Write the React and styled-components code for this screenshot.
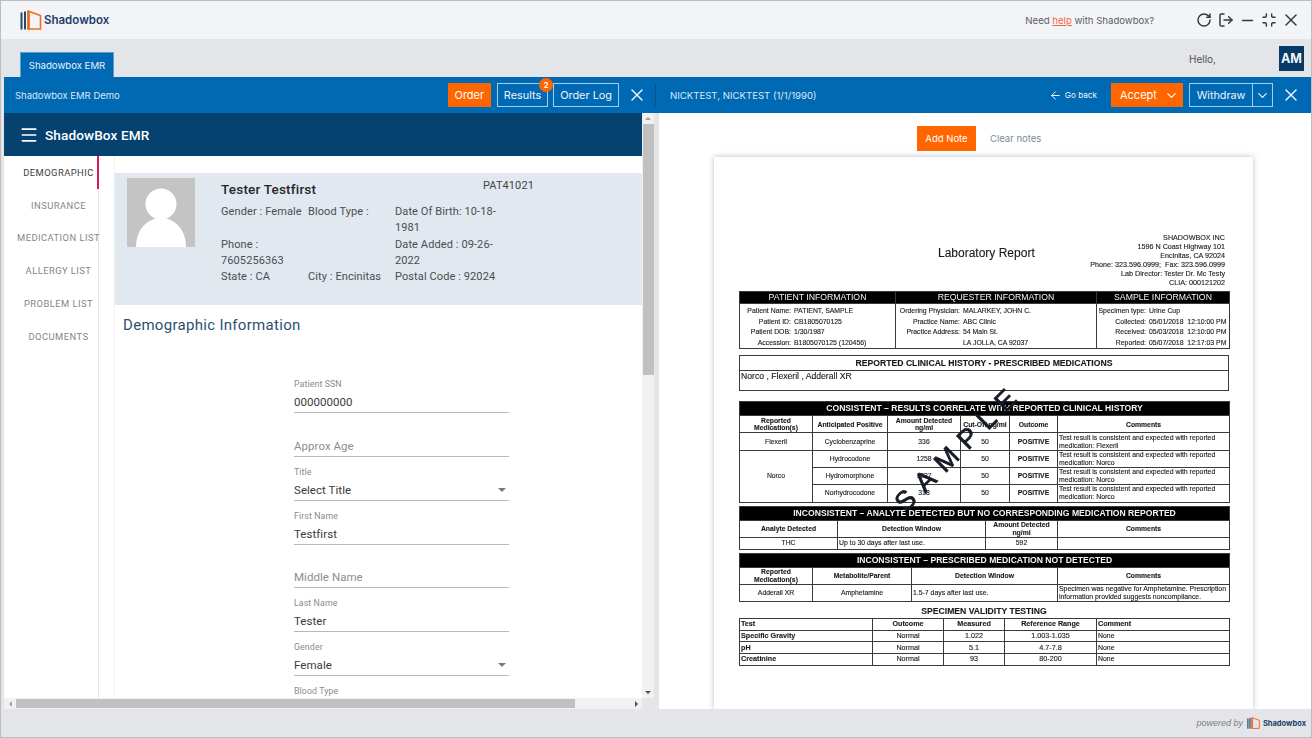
import styled, { createGlobalStyle } from "styled-components";
import { RotateCw, LogOut, Minus, Minimize, X, Menu, ArrowLeft, ChevronDown } from "lucide-react";

const Global = createGlobalStyle`
  html, body { margin: 0; padding: 0; }
  body { font-family: "Inter", "Liberation Sans", sans-serif; overflow: hidden; }
  * { box-sizing: border-box; }
`;

const Logo = ({ h = 20 }) => (
  <svg width={h * 1.15} height={h} viewBox="0 0 23 20" fill="none">
    <rect x="0.5" y="2.5" width="2" height="17" fill="#1d4b78" />
    <rect x="4" y="1.5" width="2" height="18" fill="#1d4b78" />
    <path d="M8 1 L20.5 5.5 V19 H8 Z" stroke="#f26a1b" strokeWidth="1.6" />
    <rect x="7.5" y="1" width="2.4" height="18.6" fill="#f26a1b" />
  </svg>
);

const consistentRows = [
  ["Cyclobenzaprine", "336", "Flexeril"],
  ["Hydrocodone", "1258", "Norco"],
  ["Hydromorphone", "1237", "Norco"],
  ["Norhydrocodone", "318", "Norco"],
];

const validityRows = [
  ["Specific Gravity", "1.022", "1.003-1.035"],
  ["pH", "5.1", "4.7-7.8"],
  ["Creatinine", "93", "80-200"],
];

const Cols = ({ widths }) => (
  <colgroup>
    {widths.map((w, i) => (
      <col key={i} width={w} />
    ))}
  </colgroup>
);

const Field = ({ label, value, placeholder, select }) => (
  <FieldBox>
    {label && <FieldLabel>{label}</FieldLabel>}
    <FieldValue $placeholder={placeholder}>
      {value || placeholder}
      {select && <Caret />}
    </FieldValue>
  </FieldBox>
);

const App = () => {
  return (
    <Shell>
      <Global />
      <TopBar>
        <Brand>
          <Logo />
          <BrandName>Shadowbox</BrandName>
        </Brand>
        <HelpText>
          Need <HelpLink>help</HelpLink> with Shadowbox?
        </HelpText>
        <WindowIcons>
          <IconCell><RotateCw size={16} strokeWidth={2.2} /></IconCell>
          <IconCell><LogOut size={16} strokeWidth={2.2} /></IconCell>
          <IconCell><Minus size={17} strokeWidth={2} /></IconCell>
          <IconCell><Minimize size={16} strokeWidth={2.2} /></IconCell>
          <IconCell><X size={20} strokeWidth={1.8} /></IconCell>
        </WindowIcons>
      </TopBar>

      <TabStrip>
        <Tab>Shadowbox EMR</Tab>
        <Hello>Hello,</Hello>
        <Avatar>AM</Avatar>
      </TabStrip>

      <Work>
        <BlueBar>
          <BarLeft>
            <BarTitle>Shadowbox EMR Demo</BarTitle>
            <OrangeButton>Order</OrangeButton>
            <OutlineButton>
              Results
              <Badge>2</Badge>
            </OutlineButton>
            <OutlineButton>Order Log</OutlineButton>
            <CloseIcon size={20} strokeWidth={1.7} $ml={3} />
          </BarLeft>
          <BarDivider />
          <BarRight>
            <PatientName>NICKTEST, NICKTEST (1/1/1990)</PatientName>
            <GoBack>
              <ArrowLeft size={13} strokeWidth={1.8} />
              Go back
            </GoBack>
            <AcceptButton>
              Accept
              <ChevronDown size={15} strokeWidth={1.8} />
            </AcceptButton>
            <SplitButton>
              <SplitLabel>Withdraw</SplitLabel>
              <SplitArrow>
                <ChevronDown size={15} strokeWidth={1.8} />
              </SplitArrow>
            </SplitButton>
            <CloseIcon size={20} strokeWidth={1.7} $ml={8} />
          </BarRight>
        </BlueBar>

        <Panels>
          <LeftPanel>
            <LeftMain>
              <LeftScroll>
                <AppHeader>
                  <Menu size={20} strokeWidth={2} />
                  ShadowBox EMR
                </AppHeader>
                <LeftBody>
                  <SideNav>
                    <NavItem $active>Demographic</NavItem>
                    <NavItem>Insurance</NavItem>
                    <NavItem>Medication List</NavItem>
                    <NavItem>Allergy List</NavItem>
                    <NavItem>Problem List</NavItem>
                    <NavItem>Documents</NavItem>
                  </SideNav>
                  <NavGap />
                  <Content>
                    <PatientCard>
                      <Photo>
                        <svg width="68" height="69" viewBox="0 0 68 69">
                          <circle cx="34" cy="26" r="15.5" fill="#fff" />
                          <path d="M9 69 C9 52 20 40 34 40 C48 40 59 52 59 69 Z" fill="#fff" />
                        </svg>
                      </Photo>
                      <CardInfo>
                        <NameRow>
                          <PatientFullName>Tester Testfirst</PatientFullName>
                          <PatientCode>PAT41021</PatientCode>
                        </NameRow>
                        <InfoGrid>
                          <span>Gender : Female</span>
                          <span>Blood Type :</span>
                          <span>Date Of Birth: 10-18-1981</span>
                          <span>Phone : 7605256363</span>
                          <span />
                          <span>Date Added : 09-26-2022</span>
                          <span>State : CA</span>
                          <span>City : Encinitas</span>
                          <span>Postal Code : 92024</span>
                        </InfoGrid>
                      </CardInfo>
                    </PatientCard>
                    <SectionTitle>Demographic Information</SectionTitle>
                    <FormColumn>
                      <Field label="Patient SSN" value="000000000" />
                      <Field placeholder="Approx Age" />
                      <Field label="Title" value="Select Title" select />
                      <Field label="First Name" value="Testfirst" />
                      <Field placeholder="Middle Name" />
                      <Field label="Last Name" value="Tester" />
                      <Field label="Gender" value="Female" select />
                      <Field label="Blood Type" />
                    </FormColumn>
                  </Content>
                </LeftBody>
              </LeftScroll>
              <VTrack>
                <ArrowCell>
                  <TriUp />
                </ArrowCell>
                <VThumb />
                <ArrowCell $end>
                  <TriDown />
                </ArrowCell>
              </VTrack>
            </LeftMain>
            <HTrack>
              <ArrowCell $h>
                <TriLeft />
              </ArrowCell>
              <HThumb />
              <ArrowCell $h $end>
                <TriRight />
              </ArrowCell>
              <Corner />
            </HTrack>
          </LeftPanel>

          <RightPanel>
            <NoteBar>
              <OrangeNote>Add Note</OrangeNote>
              <ClearNotes>Clear notes</ClearNotes>
            </NoteBar>
            <Sheet>
              <SheetHead>
                <ReportTitle>Laboratory Report</ReportTitle>
                <Address>
                  <div>SHADOWBOX INC</div>
                  <div>1596 N Coast Highway 101</div>
                  <div>Encinitas, CA 92024</div>
                  <div>Phone: 323.596.0999; &nbsp;Fax: 323.596.0999</div>
                  <div>Lab Director: Tester Dr. Mc Testy</div>
                  <div>CLIA: 000121202</div>
                </Address>
              </SheetHead>

              <ReportTable>
                <Cols widths={[156, 201, 133]} />
                <tbody>
                  <tr>
                    <BlackCell $thin>PATIENT INFORMATION</BlackCell>
                    <BlackCell $thin>REQUESTER INFORMATION</BlackCell>
                    <BlackCell $thin>SAMPLE INFORMATION</BlackCell>
                  </tr>
                  <tr>
                    <InfoCell>
                      <KeyValues $key={51}>
                        <dt>Patient Name:</dt><dd>PATIENT, SAMPLE</dd>
                        <dt>Patient ID:</dt><dd>CB1805070125</dd>
                        <dt>Patient DOB:</dt><dd>1/30/1987</dd>
                        <dt>Accession:</dt><dd>B1805070125 (120456)</dd>
                      </KeyValues>
                    </InfoCell>
                    <InfoCell>
                      <KeyValues $key={64}>
                        <dt>Ordering Physician:</dt><dd>MALARKEY, JOHN C.</dd>
                        <dt>Practice Name:</dt><dd>ABC Clinic</dd>
                        <dt>Practice Address:</dt><dd>54 Main St.</dd>
                        <dt />
                        <dd>LA JOLLA, CA 92037</dd>
                      </KeyValues>
                    </InfoCell>
                    <InfoCell>
                      <KeyValues $key={49}>
                        <dt>Specimen type:</dt><dd>Urine Cup</dd>
                        <dt>Collected:</dt><dd>05/01/2018 &nbsp;12:10:00 PM</dd>
                        <dt>Received:</dt><dd>05/03/2018 &nbsp;12:10:00 PM</dd>
                        <dt>Reported:</dt><dd>05/07/2018 &nbsp;12:17:03 PM</dd>
                      </KeyValues>
                    </InfoCell>
                  </tr>
                </tbody>
              </ReportTable>

              <ReportTable $top={6}>
                <tbody>
                  <Row $h={14}>
                    <HeadCell $plain>REPORTED CLINICAL HISTORY - PRESCRIBED MEDICATIONS</HeadCell>
                  </Row>
                  <Row $h={20}>
                    <HistoryCell>Norco , Flexeril , Adderall XR</HistoryCell>
                  </Row>
                </tbody>
              </ReportTable>

              <ReportTable $top={10}>
                <Cols widths={[73, 75, 73, 49, 48, 172]} />
                <tbody>
                  <Row $h={14}>
                    <BlackCell colSpan={6}>CONSISTENT – RESULTS CORRELATE WITH REPORTED CLINICAL HISTORY</BlackCell>
                  </Row>
                  <Row $h={17}>
                    <HeadCell>Reported<br />Medication(s)</HeadCell>
                    <HeadCell>Anticipated Positive</HeadCell>
                    <HeadCell>Amount Detected<br />ng/ml</HeadCell>
                    <HeadCell>Cut-Off ng/ml</HeadCell>
                    <HeadCell>Outcome</HeadCell>
                    <HeadCell>Comments</HeadCell>
                  </Row>
                  {consistentRows.map((row, i) => (
                    <Row $h={17.3} key={row[0]}>
                      {i === 0 && <BodyCell>Flexeril</BodyCell>}
                      {i === 1 && <BodyCell rowSpan={3}>Norco</BodyCell>}
                      <BodyCell>{row[0]}</BodyCell>
                      <BodyCell>{row[1]}</BodyCell>
                      <BodyCell>50</BodyCell>
                      <BodyCell $bold>POSITIVE</BodyCell>
                      <CommentCell>
                        {`Test result is consistent and expected with reported medication: ${row[2]}`}
                      </CommentCell>
                    </Row>
                  ))}
                </tbody>
              </ReportTable>

              <ReportTable $top={3}>
                <Cols widths={[98, 148, 72, 172]} />
                <tbody>
                  <Row $h={14}>
                    <BlackCell colSpan={4}>INCONSISTENT – ANALYTE DETECTED BUT NO CORRESPONDING MEDICATION REPORTED</BlackCell>
                  </Row>
                  <Row $h={17}>
                    <HeadCell>Analyte Detected</HeadCell>
                    <HeadCell>Detection Window</HeadCell>
                    <HeadCell>Amount Detected<br />ng/ml</HeadCell>
                    <HeadCell>Comments</HeadCell>
                  </Row>
                  <Row $h={12}>
                    <BodyCell>THC</BodyCell>
                    <CommentCell>Up to 30 days after last use.</CommentCell>
                    <BodyCell>592</BodyCell>
                    <CommentCell />
                  </Row>
                </tbody>
              </ReportTable>

              <ReportTable $top={3}>
                <Cols widths={[73, 99, 146, 172]} />
                <tbody>
                  <Row $h={14}>
                    <BlackCell colSpan={4}>INCONSISTENT – PRESCRIBED MEDICATION NOT DETECTED</BlackCell>
                  </Row>
                  <Row $h={17}>
                    <HeadCell>Reported<br />Medication(s)</HeadCell>
                    <HeadCell>Metabolite/Parent</HeadCell>
                    <HeadCell>Detection Window</HeadCell>
                    <HeadCell>Comments</HeadCell>
                  </Row>
                  <Row $h={17}>
                    <BodyCell>Adderall XR</BodyCell>
                    <BodyCell>Amphetamine</BodyCell>
                    <CommentCell>1.5-7 days after last use.</CommentCell>
                    <CommentCell>
                      Specimen was negative for Amphetamine. Prescription information provided suggests noncompliance.
                    </CommentCell>
                  </Row>
                </tbody>
              </ReportTable>

              <ValidityTitle>SPECIMEN VALIDITY TESTING</ValidityTitle>
              <ReportTable $large>
                <Cols widths={[133, 71, 61, 92, 133]} />
                <tbody>
                  <Row $h={12}>
                    <HeadCell $left>Test</HeadCell>
                    <HeadCell>Outcome</HeadCell>
                    <HeadCell>Measured</HeadCell>
                    <HeadCell>Reference Range</HeadCell>
                    <HeadCell $left>Comment</HeadCell>
                  </Row>
                  {validityRows.map(row => (
                    <Row $h={11.7} key={row[0]}>
                      <HeadCell $left>{row[0]}</HeadCell>
                      <BodyCell>Normal</BodyCell>
                      <BodyCell>{row[1]}</BodyCell>
                      <BodyCell>{row[2]}</BodyCell>
                      <CommentCell>None</CommentCell>
                    </Row>
                  ))}
                </tbody>
              </ReportTable>

              <Watermark>SAMPLE</Watermark>
            </Sheet>
          </RightPanel>
        </Panels>
      </Work>

      <Footer>
        <PoweredBy>powered by</PoweredBy>
        <Logo h={12} />
        <FooterName>Shadowbox</FooterName>
      </Footer>
    </Shell>
  );
};

export default App;

/* ---------------------------- Styled Components --------------------------- */

const Shell = styled.div`
  width: 1312px;
  height: 738px;
  display: flex;
  flex-direction: column;
  border: 1px solid #bcbdc1;
  background: #e4e5e9;
  overflow: hidden;
`;

const TopBar = styled.header`
  height: 38px;
  flex: none;
  display: flex;
  align-items: center;
  padding: 0 9px 0 19px;
  background: #f3f4f6;
`;

const Brand = styled.div`
  display: flex;
  align-items: center;
  flex: 1;
`;

const BrandName = styled.span`
  margin-left: 1px;
  font-size: 11.5px;
  font-weight: 600;
  color: #1d4068;
`;

const HelpText = styled.span`
  font-size: 9.6px;
  color: #5a5f69;
  margin-right: 39px;
`;

const HelpLink = styled.span`
  color: #f0654a;
  text-decoration: underline;
`;

const WindowIcons = styled.div`
  display: flex;
  align-items: center;
  color: #33383f;
`;

const IconCell = styled.span`
  width: 21.75px;
  display: flex;
  align-items: center;
  justify-content: center;
`;

const TabStrip = styled.div`
  height: 38px;
  flex: none;
  display: flex;
  align-items: flex-end;
  padding: 0 7px 0 19px;
`;

const Tab = styled.div`
  width: 94px;
  height: 25px;
  display: flex;
  align-items: center;
  justify-content: center;
  background: #0069b4;
  border: 1px solid #5b9dcd;
  border-bottom: 0;
  color: #e8f1f8;
  font-size: 9.6px;
`;

const Hello = styled.span`
  margin-left: auto;
  align-self: center;
  padding-top: 2px;
  font-size: 10px;
  color: #4c5058;
`;

const Avatar = styled.div`
  width: 25px;
  height: 25px;
  margin: 0 0 6px 63px;
  display: flex;
  align-items: center;
  justify-content: center;
  background: #053a66;
  color: #f1f4f7;
  font-size: 12.5px;
  font-weight: 700;
`;

const Work = styled.main`
  height: 632px;
  flex: none;
  margin-left: 3px;
  display: flex;
  flex-direction: column;
`;

const BlueBar = styled.div`
  height: 36px;
  flex: none;
  display: flex;
  align-items: center;
  background: #0069b4;
  color: #fff;
`;

const BarLeft = styled.div`
  width: 651px;
  height: 100%;
  display: flex;
  align-items: center;
  gap: 5px;
  padding: 0 8px 0 11px;
`;

const BarTitle = styled.span`
  margin-right: auto;
  font-size: 9.5px;
  color: #dbe8f3;
`;

const BarDivider = styled.span`
  width: 1px;
  height: 22px;
  background: #04528d;
`;

const BarRight = styled.div`
  flex: 1;
  height: 100%;
  display: flex;
  align-items: center;
  padding: 0 10px 0 14px;
`;

const OrangeButton = styled.div`
  width: 43px;
  height: 24px;
  margin-right: 1px;
  display: flex;
  align-items: center;
  justify-content: center;
  background: #ff6600;
  color: #fff;
  font-size: 11px;
`;

const OutlineButton = styled.div`
  position: relative;
  height: 24px;
  padding: 0 6px;
  display: flex;
  align-items: center;
  border: 1px solid #a9cde6;
  color: #f0f6fa;
  font-size: 10.9px;
  white-space: nowrap;
`;

const Badge = styled.span`
  position: absolute;
  top: -6px;
  right: -6px;
  width: 14px;
  height: 14px;
  border-radius: 50%;
  display: flex;
  align-items: center;
  justify-content: center;
  background: #ff6600;
  color: #fff;
  font-size: 7.5px;
  font-weight: 700;
`;

const CloseIcon = styled(X)`
  margin-left: ${p => p.$ml}px;
  flex: none;
  color: #f2f7fb;
`;

const PatientName = styled.span`
  margin-right: auto;
  font-size: 9.6px;
  color: #dbe8f3;
`;

const GoBack = styled.span`
  display: flex;
  align-items: center;
  gap: 3px;
  margin-right: 14px;
  font-size: 8.2px;
  color: #eef4f9;
`;

const AcceptButton = styled.div`
  width: 72px;
  height: 24px;
  padding: 0 4px 0 9px;
  display: flex;
  align-items: center;
  justify-content: space-between;
  background: #ff6600;
  color: #fff;
  font-size: 11px;
`;

const SplitButton = styled.div`
  height: 24px;
  margin-left: 6px;
  display: flex;
  align-items: center;
  border: 1px solid #a9cde6;
  font-size: 10.8px;
  color: #f0f6fa;
`;

const SplitLabel = styled.span`
  width: 62px;
  text-align: center;
`;

const SplitArrow = styled.span`
  width: 20px;
  height: 100%;
  display: flex;
  align-items: center;
  justify-content: center;
  border-left: 1px solid #a9cde6;
`;

const Panels = styled.div`
  flex: 1;
  min-height: 0;
  display: flex;
  justify-content: space-between;
`;

const LeftPanel = styled.section`
  width: 650px;
  height: 597px;
  display: flex;
  flex-direction: column;
  background: #fff;
  border-bottom: 1px solid #26282b;
`;

const LeftMain = styled.div`
  flex: 1;
  min-height: 0;
  display: flex;
`;

const LeftScroll = styled.div`
  width: 638px;
  display: flex;
  flex-direction: column;
`;

const AppHeader = styled.div`
  height: 43px;
  flex: none;
  display: flex;
  align-items: center;
  gap: 6px;
  padding-left: 15px;
  background: #064270;
  color: #fff;
  font-family: "Roboto", sans-serif;
  font-size: 13.6px;
  font-weight: 500;
  letter-spacing: 0.1px;
`;

const LeftBody = styled.div`
  flex: 1;
  min-height: 0;
  display: flex;
`;

const SideNav = styled.nav`
  width: 95px;
  flex: none;
  border-right: 1px solid #e6e6e6;
  font-family: "Roboto", sans-serif;
`;

const NavItem = styled.div`
  height: 32.8px;
  padding-left: 16px;
  margin-right: -1px;
  display: flex;
  align-items: center;
  justify-content: center;
  white-space: nowrap;
  text-transform: uppercase;
  font-size: 9.4px;
  letter-spacing: 0.45px;
  color: ${p => (p.$active ? "#3c3c3c" : "#858585")};
  border-right: 2px solid ${p => (p.$active ? "#d81b60" : "transparent")};
`;

const NavGap = styled.div`
  width: 16px;
  flex: none;
  border-right: 1px solid #f0f0f0;
`;

const Content = styled.div`
  flex: 1;
  min-width: 0;
  padding-top: 17px;
  overflow: hidden;
  font-family: "Roboto", sans-serif;
`;

const PatientCard = styled.div`
  height: 132px;
  display: flex;
  padding: 5px 12px;
  background: #e2e8ef;
`;

const Photo = styled.div`
  width: 68px;
  height: 69px;
  flex: none;
  background: #c4c4c4;
`;

const CardInfo = styled.div`
  margin-left: 26px;
  padding-top: 1px;
`;

const NameRow = styled.div`
  display: flex;
  align-items: flex-start;
`;

const PatientFullName = styled.span`
  width: 262px;
  height: 17px;
  padding-top: 2px;
  font-size: 13.5px;
  font-weight: 500;
  color: #26292c;
  letter-spacing: 0.2px;
`;

const PatientCode = styled.span`
  font-size: 11px;
  color: #444;
  letter-spacing: 0.1px;
`;

const InfoGrid = styled.div`
  display: grid;
  grid-template-columns: 87px 87px 106px;
  margin-top: 8px;
  font-size: 11px;
  line-height: 16.33px;
  letter-spacing: 0.1px;
  color: #4a4d50;
`;

const SectionTitle = styled.h2`
  margin: 11px 0 0 8px;
  font-size: 15px;
  line-height: 18px;
  font-weight: 400;
  letter-spacing: 0.3px;
  color: #2d4f72;
`;

const FormColumn = styled.div`
  width: 215px;
  margin: 35.5px 0 0 179px;
  display: flex;
  flex-direction: column;
`;

const FieldBox = styled.div`
  height: 43.8px;
  flex: none;
  display: flex;
  flex-direction: column;
  justify-content: flex-end;
`;

const FieldLabel = styled.label`
  font-size: 8.8px;
  line-height: 11px;
  color: #8b8b8b;
  letter-spacing: 0.1px;
  margin-bottom: 1px;
`;

const FieldValue = styled.div`
  position: relative;
  height: 22px;
  font-size: 11.5px;
  line-height: 22px;
  letter-spacing: 0.05px;
  color: ${p => (p.$placeholder ? "#8d8d8d" : "#3a3a3a")};
  border-bottom: 1px solid #b8b8b8;
  &:empty {
    border-bottom: 0;
  }
`;

const Caret = styled.span`
  position: absolute;
  right: 3px;
  top: 9px;
  border-left: 4px solid transparent;
  border-right: 4px solid transparent;
  border-top: 4px solid #7a7a7a;
`;

const VTrack = styled.div`
  width: 12px;
  flex: none;
  display: flex;
  flex-direction: column;
  background: #f1f1f1;
`;

const ArrowCell = styled.div`
  ${p => (p.$h ? "width: 12px;" : "height: 11px;")}
  flex: none;
  display: flex;
  align-items: center;
  justify-content: center;
  ${p => p.$end && (p.$h ? "margin-left: auto;" : "margin-top: auto;")}
`;

const VThumb = styled.div`
  height: 251px;
  margin-left: 1px;
  background: #c0c0c0;
`;

const TriUp = styled.span`
  border: 3px solid transparent;
  border-top: 0;
  border-bottom: 3px solid #a3a3a3;
`;

const TriDown = styled.span`
  border: 3px solid transparent;
  border-bottom: 0;
  border-top: 3px solid #505050;
`;

const TriLeft = styled.span`
  border: 3px solid transparent;
  border-left: 0;
  border-right: 3px solid #a3a3a3;
`;

const TriRight = styled.span`
  border: 3px solid transparent;
  border-right: 0;
  border-left: 3px solid #505050;
`;

const HTrack = styled.div`
  height: 11px;
  flex: none;
  display: flex;
  background: #f1f1f1;
`;

const HThumb = styled.div`
  width: 559px;
  height: 9px;
  margin-top: 1px;
  background: #c0c0c0;
`;

const Corner = styled.div`
  width: 12px;
  flex: none;
  background: #e6e6e6;
`;

const RightPanel = styled.section`
  width: 652px;
  height: 597px;
  display: flex;
  flex-direction: column;
  padding: 0 58px 0 55px;
  overflow: hidden;
  background: #fff;
  border-bottom: 1px solid #26282b;
`;

const NoteBar = styled.div`
  height: 44px;
  flex: none;
  display: flex;
  align-items: center;
  gap: 14px;
  padding: 7px 0 0 203px;
`;

const OrangeNote = styled.div`
  width: 59px;
  height: 25px;
  display: flex;
  align-items: center;
  justify-content: center;
  background: #ff6600;
  color: #fff;
  font-size: 9.5px;
`;

const ClearNotes = styled.span`
  font-size: 9.5px;
  color: #7d8a98;
`;

const Sheet = styled.article`
  position: relative;
  flex: 1;
  padding: 77px 24px 0 25px;
  background: #fff;
  box-shadow: 0 0 6px rgba(0, 0, 0, 0.25);
  font-family: "Liberation Sans", Arial, sans-serif;
  color: #1a1a1a;
  filter: blur(0.3px);
  -webkit-text-stroke: 0.12px #1a1a1a;
`;

const SheetHead = styled.div`
  height: 57px;
  padding-left: 199px;
  display: flex;
  justify-content: space-between;
  align-items: flex-start;
`;

const ReportTitle = styled.h1`
  margin: 12px 0 0;
  font-size: 12px;
  line-height: 14px;
  font-weight: 400;
`;

const Address = styled.div`
  margin-right: 4px;
  text-align: right;
  font-size: 7.2px;
  line-height: 8.9px;
  white-space: nowrap;
`;

const ReportTable = styled.table`
  width: 490px;
  margin-top: ${p => p.$top || 0}px;
  border-collapse: collapse;
  table-layout: fixed;
  font-size: ${p => (p.$large ? "7.2px" : "6.8px")};
  td {
    border: 1px solid #3a3a3a;
    padding: 0 1px;
    overflow: hidden;
  }
`;

const Row = styled.tr`
  height: ${p => p.$h}px;
`;

const BlackCell = styled.td`
  background: #000;
  color: #f4f4f4;
  -webkit-text-stroke: 0;
  text-align: center;
  font-size: ${p => (p.$thin ? "8.7px" : "8.6px")};
  font-weight: ${p => (p.$thin ? 400 : 700)};
  line-height: 11px;
  white-space: nowrap;
`;

const HeadCell = styled.td`
  text-align: ${p => (p.$left ? "left" : "center")};
  font-size: ${p => (p.$plain ? "8.65px" : "inherit")};
  font-weight: 700;
  line-height: ${p => (p.$plain ? "14px" : "7.7px")};
  white-space: nowrap;
`;

const BodyCell = styled.td`
  text-align: center;
  font-weight: ${p => (p.$bold ? 700 : 400)};
  line-height: 8px;
  white-space: nowrap;
`;

const CommentCell = styled.td`
  text-align: left;
  font-size: 6.9px;
  line-height: 8px;
`;

const HistoryCell = styled.td`
  font-size: 8.65px;
  line-height: 10px;
  vertical-align: top;
  padding-top: 0 !important;
`;

const InfoCell = styled.td`
  height: 45px;
  padding: 2px 0 0 !important;
  vertical-align: middle;
`;

const KeyValues = styled.dl`
  margin: 0;
  display: grid;
  grid-template-columns: ${p => p.$key}px 1fr;
  column-gap: 3px;
  font-size: 6.9px;
  line-height: 10.6px;
  white-space: nowrap;
  dt {
    text-align: right;
  }
  dd {
    margin: 0;
  }
`;

const ValidityTitle = styled.div`
  margin-top: 4px;
  height: 12px;
  text-align: center;
  font-size: 8.6px;
  line-height: 10px;
  font-weight: 700;
`;

const Watermark = styled.div`
  position: absolute;
  left: 145px;
  top: 275px;
  width: 200px;
  white-space: nowrap;
  text-align: center;
  transform: rotate(-45deg);
  font-size: 27px;
  line-height: 30px;
  letter-spacing: 10px;
  color: #141b26;
  -webkit-text-stroke: 0.8px #141b26;
  pointer-events: none;
`;

const Footer = styled.footer`
  flex: 1;
  display: flex;
  align-items: center;
  justify-content: flex-end;
  gap: 2px;
  padding: 0 5px 0 0;
  background: #e4e5e9;
`;

const PoweredBy = styled.span`
  margin-right: 2px;
  font-family: "Liberation Sans", sans-serif;
  font-style: italic;
  font-size: 9px;
  color: #7b7f86;
`;

const FooterName = styled.span`
  font-size: 7.5px;
  font-weight: 700;
  color: #1d4068;
`;
